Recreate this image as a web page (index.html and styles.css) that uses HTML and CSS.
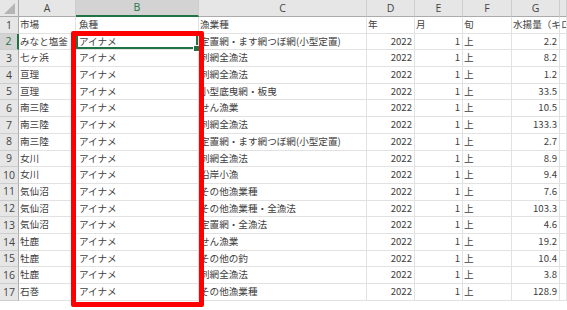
FILE: index.html
```html
<!DOCTYPE html>
<html lang="ja">
<head>
<meta charset="utf-8">
<title>Sheet</title>
<link rel="stylesheet" href="styles.css">
</head>
<body>
<div class="sheet">
  <div class="grid">
    <div class="hd corner"><span class="tri"></span></div>
    <div class="hd col">A</div>
    <div class="hd col sel-col">B</div>
    <div class="hd col">C</div>
    <div class="hd col">D</div>
    <div class="hd col">E</div>
    <div class="hd col">F</div>
    <div class="hd col">G</div>
    <div class="hd col"></div>

    <div class="hd rn">1</div><div class="c">市場</div><div class="c">魚種</div><div class="c">漁業種</div><div class="c">年</div><div class="c">月</div><div class="c">旬</div><div class="c ovf">水揚量（キロ）</div><div class="c"></div>
    <div class="hd rn sel-row">2</div><div class="c">みなと塩釜</div><div class="c active">アイナメ<span class="handle"></span></div><div class="c">定置網・ます網つぼ網(小型定置)</div><div class="c n">2022</div><div class="c n">1</div><div class="c">上</div><div class="c n">2.2</div><div class="c"></div>
    <div class="hd rn">3</div><div class="c">七ヶ浜</div><div class="c">アイナメ</div><div class="c">刺網全漁法</div><div class="c n">2022</div><div class="c n">1</div><div class="c">上</div><div class="c n">8.2</div><div class="c"></div>
    <div class="hd rn">4</div><div class="c">亘理</div><div class="c">アイナメ</div><div class="c">刺網全漁法</div><div class="c n">2022</div><div class="c n">1</div><div class="c">上</div><div class="c n">1.2</div><div class="c"></div>
    <div class="hd rn">5</div><div class="c">亘理</div><div class="c">アイナメ</div><div class="c">小型底曳網・板曳</div><div class="c n">2022</div><div class="c n">1</div><div class="c">上</div><div class="c n">33.5</div><div class="c"></div>
    <div class="hd rn">6</div><div class="c">南三陸</div><div class="c">アイナメ</div><div class="c">せん漁業</div><div class="c n">2022</div><div class="c n">1</div><div class="c">上</div><div class="c n">10.5</div><div class="c"></div>
    <div class="hd rn">7</div><div class="c">南三陸</div><div class="c">アイナメ</div><div class="c">刺網全漁法</div><div class="c n">2022</div><div class="c n">1</div><div class="c">上</div><div class="c n">133.3</div><div class="c"></div>
    <div class="hd rn">8</div><div class="c">南三陸</div><div class="c">アイナメ</div><div class="c">定置網・ます網つぼ網(小型定置)</div><div class="c n">2022</div><div class="c n">1</div><div class="c">上</div><div class="c n">2.7</div><div class="c"></div>
    <div class="hd rn">9</div><div class="c">女川</div><div class="c">アイナメ</div><div class="c">刺網全漁法</div><div class="c n">2022</div><div class="c n">1</div><div class="c">上</div><div class="c n">8.9</div><div class="c"></div>
    <div class="hd rn">10</div><div class="c">女川</div><div class="c">アイナメ</div><div class="c">沿岸小漁</div><div class="c n">2022</div><div class="c n">1</div><div class="c">上</div><div class="c n">9.4</div><div class="c"></div>
    <div class="hd rn">11</div><div class="c">気仙沼</div><div class="c">アイナメ</div><div class="c">その他漁業種</div><div class="c n">2022</div><div class="c n">1</div><div class="c">上</div><div class="c n">7.6</div><div class="c"></div>
    <div class="hd rn">12</div><div class="c">気仙沼</div><div class="c">アイナメ</div><div class="c">その他漁業種・全漁法</div><div class="c n">2022</div><div class="c n">1</div><div class="c">上</div><div class="c n">103.3</div><div class="c"></div>
    <div class="hd rn">13</div><div class="c">気仙沼</div><div class="c">アイナメ</div><div class="c">定置網・全漁法</div><div class="c n">2022</div><div class="c n">1</div><div class="c">上</div><div class="c n">4.6</div><div class="c"></div>
    <div class="hd rn">14</div><div class="c">牡鹿</div><div class="c">アイナメ</div><div class="c">せん漁業</div><div class="c n">2022</div><div class="c n">1</div><div class="c">上</div><div class="c n">19.2</div><div class="c"></div>
    <div class="hd rn">15</div><div class="c">牡鹿</div><div class="c">アイナメ</div><div class="c">その他の釣</div><div class="c n">2022</div><div class="c n">1</div><div class="c">上</div><div class="c n">10.4</div><div class="c"></div>
    <div class="hd rn">16</div><div class="c">牡鹿</div><div class="c">アイナメ</div><div class="c">刺網全漁法</div><div class="c n">2022</div><div class="c n">1</div><div class="c">上</div><div class="c n">3.8</div><div class="c"></div>
    <div class="hd rn">17</div><div class="c">石巻</div><div class="c">アイナメ</div><div class="c">その他漁業種</div><div class="c n">2022</div><div class="c n">1</div><div class="c">上</div><div class="c n">128.9</div><div class="c"></div>
  </div>
  <div class="highlight"></div>
</div>
</body>
</html>
```

FILE: styles.css
```css
html, body {
  margin: 0;
  padding: 0;
  background: #ffffff;
}

.sheet {
  position: relative;
  width: 567px;
  height: 310px;
  overflow: hidden;
}

.grid {
  display: grid;
  grid-template-columns: 19px 57px 123px 168px 48px 48px 49px 48px 1fr;
  grid-template-rows: 17px repeat(17, 16.7px);
  font-family: "Noto Sans CJK JP", "Noto Sans", sans-serif;
  font-size: 9.6px;
  color: #404040;
}

.c {
  box-sizing: border-box;
  border-right: 1px solid #e2e2e2;
  border-bottom: 1px solid #e2e2e2;
  display: flex;
  align-items: center;
  padding: 0 2px 0 1px;
  white-space: nowrap;
  line-height: 1;
  overflow: visible;
}

.c.n {
  justify-content: flex-end;
}

.hd {
  box-sizing: border-box;
  background: #e6e6e6;
  color: #444444;
  font-family: "Open Sans", "Liberation Sans", sans-serif;
  font-size: 10.5px;
  display: flex;
  align-items: center;
  justify-content: center;
  line-height: 1;
}

.col {
  border-right: 1px solid #cdcdcd;
  border-bottom: 1px solid #ababab;
}

.rn {
  border-right: 1px solid #ababab;
  border-bottom: 1px solid #cdcdcd;
}

.corner {
  position: relative;
  border-right: 1px solid #ababab;
  border-bottom: 1px solid #ababab;
}

.tri {
  position: absolute;
  right: 3px;
  bottom: 2px;
  width: 0;
  height: 0;
  border-left: 11px solid transparent;
  border-bottom: 11px solid #b5b5b5;
}

.sel-col {
  background: #d3d3d3;
  color: #217346;
  border-bottom: 2px solid #217346;
}

.sel-row {
  background: #d3d3d3;
  color: #217346;
  border-right: 2px solid #217346;
}

.active {
  position: relative;
  box-shadow: inset 0 0 0 2px #217346;
}

.handle {
  position: absolute;
  right: -2px;
  bottom: -3px;
  width: 5px;
  height: 5px;
  background: #217346;
  border: 1px solid #ffffff;
}

.grid > .c:nth-child(9n+3) {
  padding-left: 3px;
}

.highlight {
  position: absolute;
  left: 71px;
  top: 31px;
  width: 133px;
  height: 276px;
  box-sizing: border-box;
  border: 5px solid #ff0000;
  border-radius: 2px;
}
```
